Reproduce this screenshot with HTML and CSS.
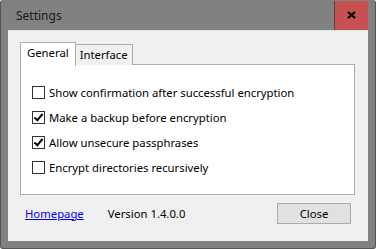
FILE: index.html
```html
<!DOCTYPE html>
<html lang="en">
<head>
    <meta charset="UTF-8">
    <title>Settings</title>
    <link rel="stylesheet" href="styles.css">
</head>
<body>
    <div class="window">
        <!-- Title bar -->
        <div class="titlebar">
            <span class="title">Settings</span>
            <button class="close-x" aria-label="Close">
                <svg width="9" height="8" viewBox="0 0 9 8">
                    <path d="M1 1 L8 7 M8 1 L1 7" stroke="#000" stroke-width="2.2" fill="none"/>
                </svg>
            </button>
        </div>

        <div class="client">
            <div class="tabs">
                <div class="tab active">General</div>
                <div class="tab">Interface</div>
            </div>
            <div class="panel">
                <label class="option"><span class="box"></span>Show confirmation after successful encryption</label>
                <label class="option"><span class="box checked"></span>Make a backup before encryption</label>
                <label class="option"><span class="box checked"></span>Allow unsecure passphrases</label>
                <label class="option"><span class="box"></span>Encrypt directories recursively</label>
            </div>

            <div class="footer">
                <a href="#" class="link">Homepage</a>
                <span class="version">Version 1.4.0.0</span>
                <button class="btn">Close</button>
            </div>
        </div>
    </div>
</body>
</html>
```

FILE: styles.css
```css
body {
    margin: 0;
    padding: 0;
    background-color: #fff;
    font-family: 'Noto Sans', 'Open Sans', sans-serif;
    font-size: 11.3px;
    color: #000;
}

.window {
    width: 376px;
    height: 249px;
    box-sizing: border-box;
    background-color: #818181;
    border: 1px solid #555;
    border-top: none;
    border-radius: 3px;
    padding: 0 7px 7px 7px;
    display: flex;
    flex-direction: column;
}

.titlebar {
    height: 30px;
    display: flex;
    align-items: center;
    justify-content: space-between;
}

.title {
    margin-left: 8px;
    color: #1a1a1a;
    font-size: 12px;
}

.close-x {
    width: 34px;
    height: 30px;
    padding: 0;
    border: none;
    border-left: 1px solid #6b3a3a;
    border-bottom: 1px solid #6b3a3a;
    background-color: #c75050;
    display: flex;
    align-items: center;
    justify-content: center;
    box-sizing: border-box;
    margin-top: 1px;
}

.client {
    flex-grow: 1;
    background-color: #f0f0f0;
    border-top: 1px solid #dde4ec;
    padding: 12px 13px 0 12px;
    display: flex;
    flex-direction: column;
}

.tabs {
    display: flex;
    align-items: flex-end;
    height: 22px;
    position: relative;
    z-index: 1;
    margin-bottom: -1px;
}

.tab {
    height: 21px;
    padding: 0 4px;
    border: 1px solid #adadad;
    border-bottom: none;
    background-color: #f0f0f0;
    line-height: 19px;
    box-sizing: border-box;
}

.tab.active {
    height: 24px;
    background-color: #fff;
    padding: 0 6px;
    line-height: 20px;
    margin-bottom: -1px;
    border-right: 1px solid #adadad;
}

.tab.active + .tab {
    border-left: none;
}

.panel {
    height: 131px;
    box-sizing: border-box;
    background-color: #fff;
    border: 1px solid #adadad;
    padding: 19px 0 0 11px;
    display: flex;
    flex-direction: column;
    gap: 9px;
}

.option {
    display: flex;
    align-items: center;
    height: 16px;
    white-space: nowrap;
}

.box {
    width: 13px;
    height: 13px;
    box-sizing: border-box;
    border: 1px solid #333;
    background-color: #fff;
    margin-right: 4px;
    position: relative;
}

.box.checked::after {
    content: '';
    position: absolute;
    left: 3px;
    top: 0px;
    width: 3px;
    height: 7px;
    border: solid #000;
    border-width: 0 2px 2px 0;
    transform: rotate(40deg);
}

.footer {
    display: flex;
    align-items: center;
    height: 20px;
    margin-top: 8px;
    padding-left: 5px;
}

.link {
    color: #0000ff;
    text-decoration: underline;
}

.version {
    margin-left: 24px;
}

.btn {
    margin-left: auto;
    margin-right: 4px;
    width: 74px;
    height: 21px;
    font-family: inherit;
    font-size: 11.3px;
    background-color: #e1e1e1;
    border: 1px solid #adadad;
    padding: 0;
}
```
